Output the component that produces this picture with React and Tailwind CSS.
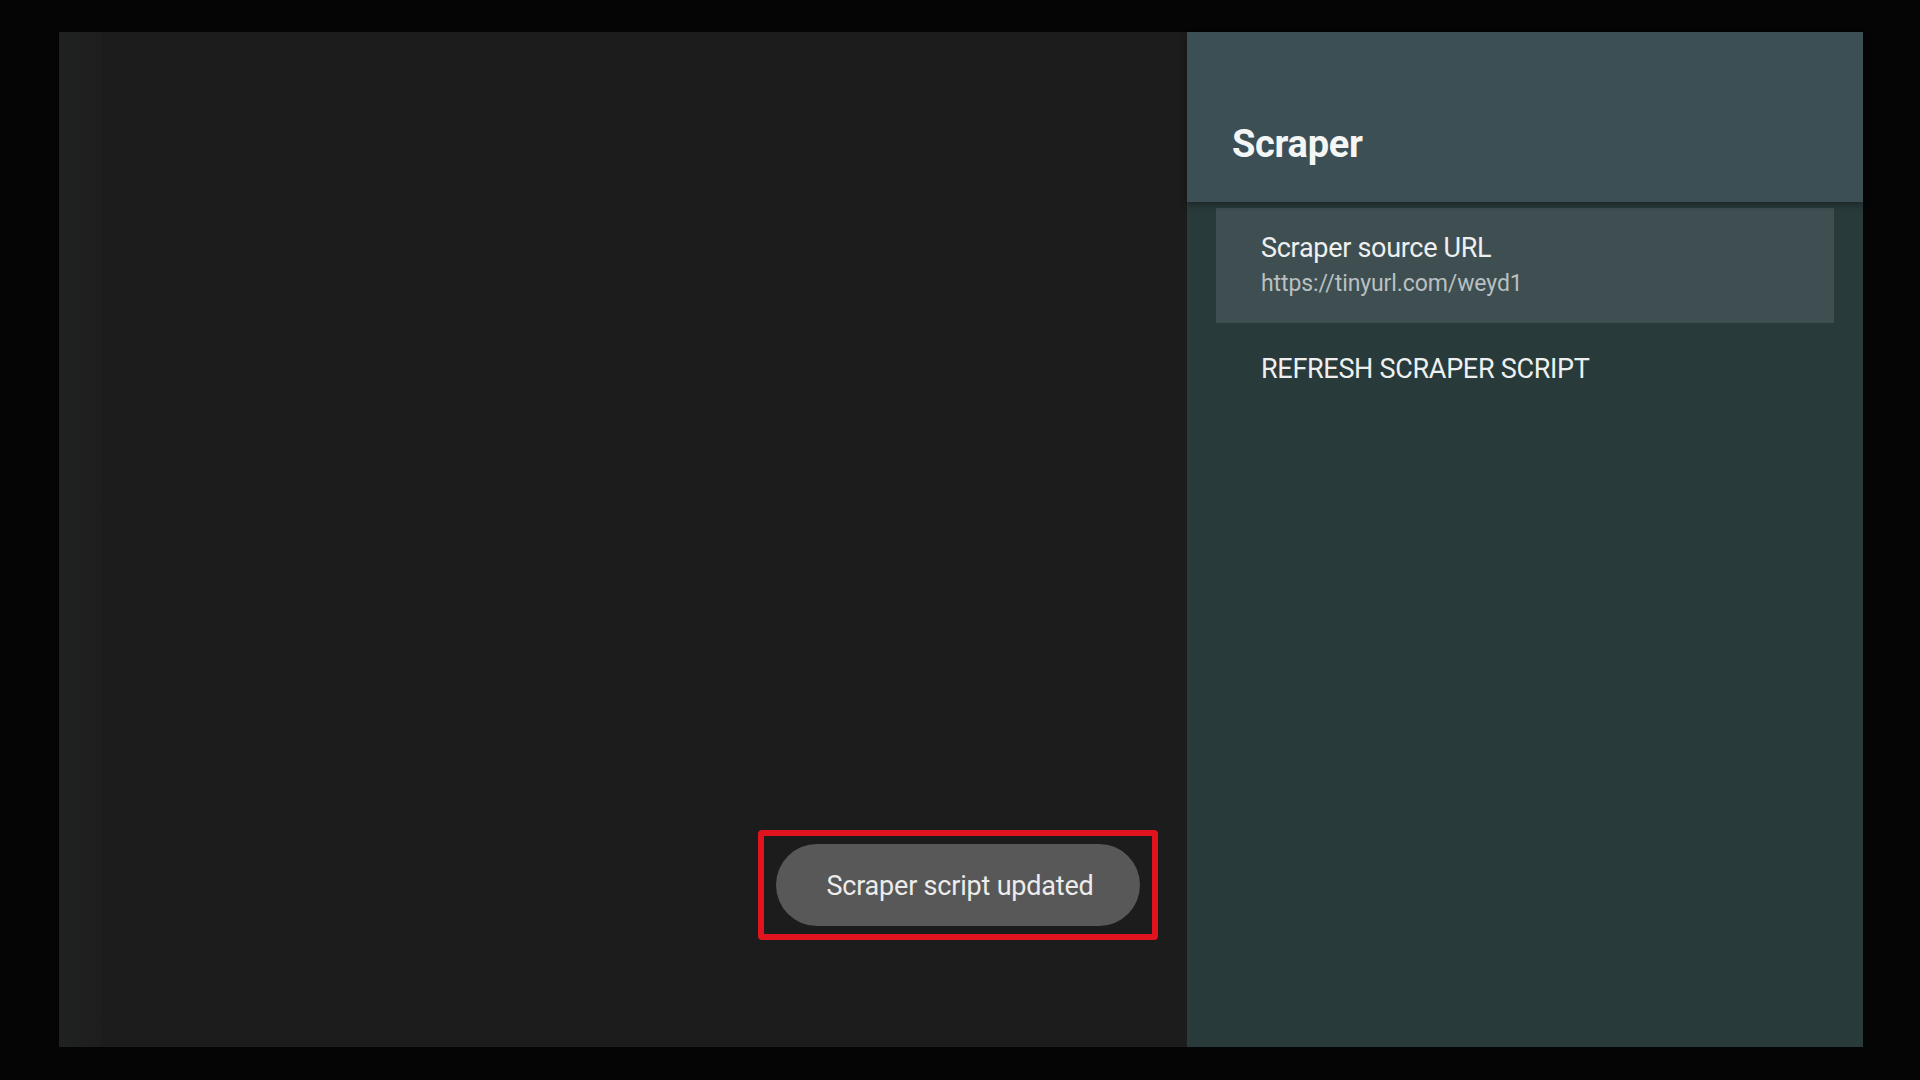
export default function App() {
  return (
    <div className="w-[1920px] h-[1080px] bg-[#050505] pt-[32px] pl-[59px]" style={{ fontFamily: 'Roboto, "Liberation Sans", sans-serif' }}>
      <div className="flex w-[1804px] h-[1015px]">
        <div className="relative flex w-[1128px] h-full bg-[#1c1c1c]">
          <div className="w-[42px] h-full bg-gradient-to-r from-[#202121] to-[#1e1e1e]" />
          <div className="flex-1 h-full bg-[#1c1c1c]" />
          <div className="absolute left-[699px] top-[798px] w-[400px] h-[110px] rounded-[4px] border-[6px] border-[#e0141e] flex items-center justify-center">
            <div className="w-[364px] h-[82px] rounded-full bg-[#585858] flex items-center justify-center text-[27px] text-[#ececec] tracking-[-0.2px] pl-[4px] pt-[3px]">
              Scraper script updated
            </div>
          </div>
        </div>
        <div className="flex flex-col w-[676px] h-full bg-[#293a3b]">
          <div className="h-[170px] bg-[#3b4f55] flex items-start pl-[45px] pt-[89px] shadow-[0_3px_6px_rgba(0,0,0,0.35)] relative z-10">
            <span className="text-[38px] leading-[46px] font-bold text-[#f4f6f6] tracking-[-0.3px]">Scraper</span>
          </div>
          <div className="flex flex-col pt-[6px] px-[29px]">
            <div className="h-[115px] bg-[#3e4e51] flex flex-col justify-center pl-[45px] pb-[2px]">
              <div className="text-[27px] text-[#eef0f0] leading-[32px] tracking-[-0.3px] mt-[1px]">Scraper source URL</div>
              <div className="text-[23px] text-[#b9c0c1] leading-[30px] tracking-[-0.1px] mt-[5px]">https://tinyurl.com/weyd1</div>
            </div>
            <div className="h-[94px] flex items-center pl-[45px] text-[27px] text-[#eef0f0] tracking-[-0.3px] pb-[2px]">
              REFRESH SCRAPER SCRIPT
            </div>
          </div>
        </div>
      </div>
    </div>
  );
}
